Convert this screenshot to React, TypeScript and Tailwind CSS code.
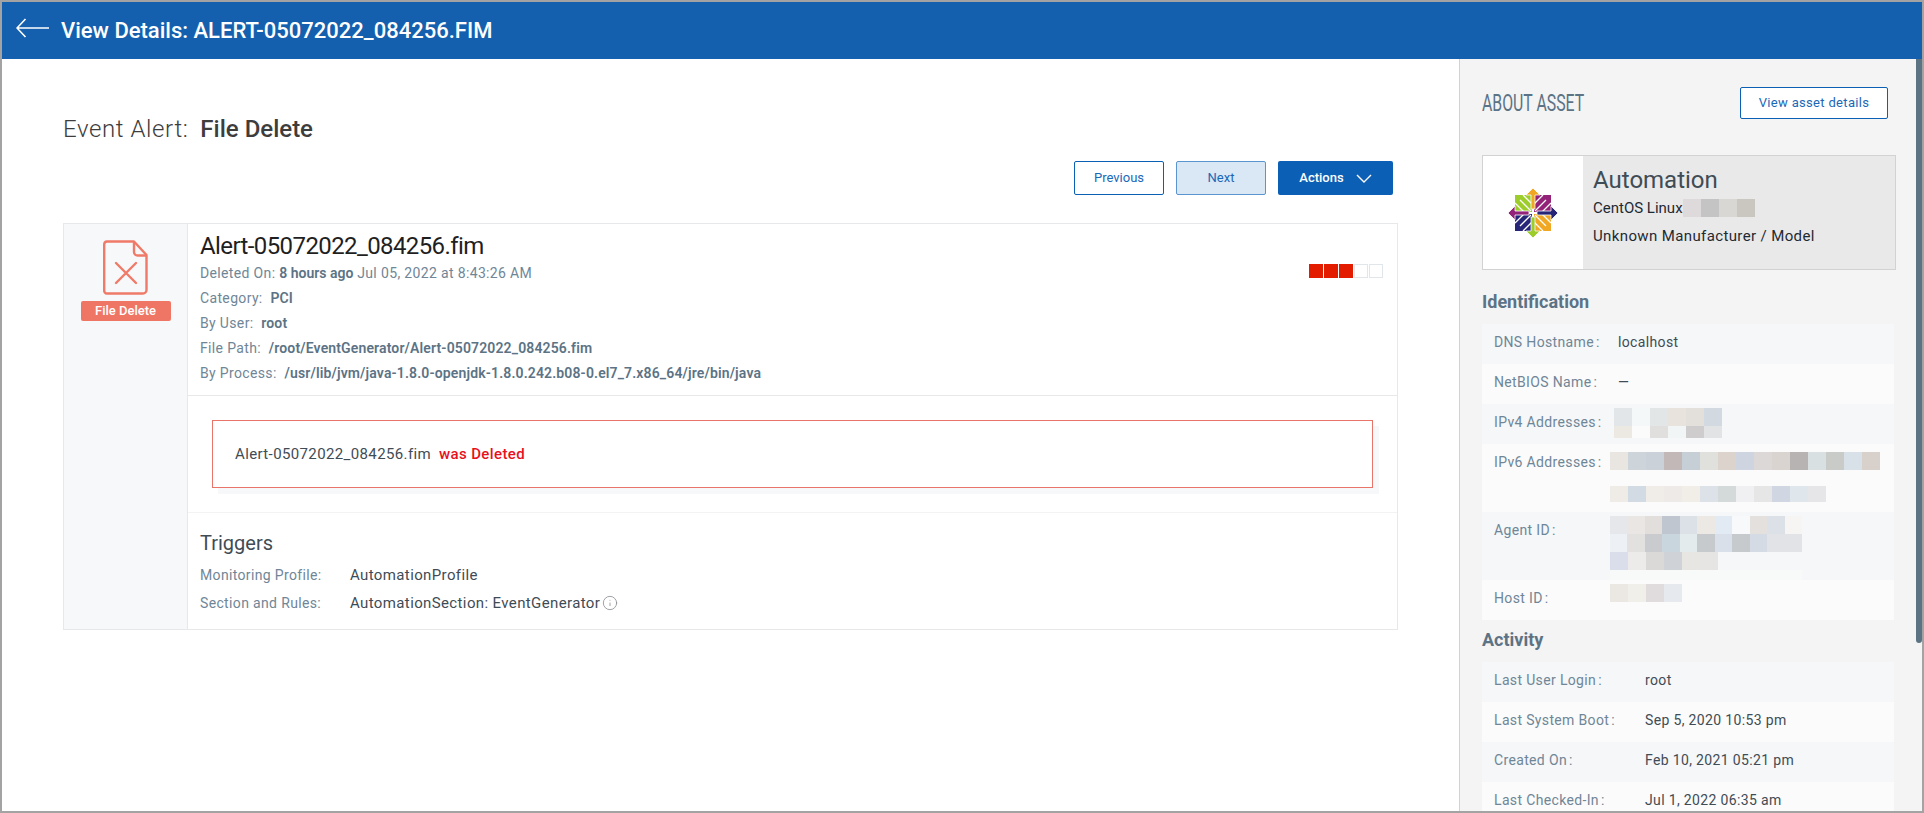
import { Info } from "lucide-react";

const LABEL = "text-sm tracking-wide text-[#6f8697]";
const VALUE = "text-sm tracking-wide text-[#3f4c55]";
const BODY_VALUE = "text-[15px] tracking-wide text-[#3f4c55]";

const ROBOTO = { fontFamily: "Roboto, sans-serif" };

type BlurRow = { height: string; colors: string[]; className?: string };

const IPV4_BLUR: BlurRow[] = [
  {
    height: "h-4.5",
    colors: ["#e2e6e8", "#f5f8f9", "#e2e6e7", "#e9e3de", "#e3e0dc", "#d3d9e0"],
  },
  {
    height: "h-3",
    colors: ["#ece8e2", "#fbfbfb", "#e0dfdd", "#f2f5f6", "#cecccc", "#e2e3e5"],
  },
];

const IPV6_BLUR: BlurRow[] = [
  {
    height: "h-4.5",
    colors: [
      "#e9e5e1", "#cdd4da", "#cad1d8", "#c2b8b8", "#c6ced6", "#e0e1dd", "#ddd3cd", "#ced5e0",
      "#dcd8d8", "#d9d4d0", "#b8b3b3", "#d8e0e1", "#c9cbc9", "#d8e1e8", "#d8d0ca",
    ],
  },
  {
    height: "h-4",
    className: "mt-4",
    colors: [
      "#efebe7", "#d2dbe3", "#f0ede9", "#eeeae7", "#f1eee8", "#dde1e8", "#d4d9d9", "#f0f0f2",
      "#e6e6e6", "#d0d7e2", "#dfe6ec", "#e6e6e8",
    ],
  },
];

const AGENT_BLUR: BlurRow[] = [
  {
    height: "h-4.5",
    colors: [
      "#e6e7ea", "#eae6e4", "#e1dedb", "#bfc6d0", "#dce1e8", "#ece9e5", "#e2eaf3", "#f8f9fa",
      "#e3e0dd", "#dce0e7", "#f6f5f3",
    ],
  },
  {
    height: "h-4.5",
    colors: [
      "#edf1f5", "#e2e1df", "#c9cbce", "#cad6de", "#e3ebed", "#c6cacc", "#dae0e9", "#c6cacd",
      "#d5dbe4", "#e2e3e6", "#e2e3e6",
    ],
  },
  {
    height: "h-4.5",
    colors: ["#dadeea", "#edebe9", "#dad9d7", "#cfd2d7", "#e7e6e3", "#e6e5e3"],
  },
  {
    height: "h-4",
    colors: Array(11).fill("#f8f9f9"),
  },
];

const HOST_BLUR: BlurRow[] = [
  { height: "h-4.5", colors: ["#ebe7e3", "#f1efe9", "#e0dcdd", "#e6e9ee"] },
];

const OS_BLUR: BlurRow[] = [
  { height: "h-4.5", colors: ["#dedadb", "#c4c4c4", "#d8d7d4", "#cac7c1"] },
];

const ACTIVITY = [
  { label: "Last User Login", value: "root" },
  { label: "Last System Boot", value: "Sep 5, 2020 10:53 pm" },
  { label: "Created On", value: "Feb 10, 2021 05:21 pm" },
  { label: "Last Checked-In", value: "Jul 1, 2022 06:35 am" },
];

function Blur({ rows }: { rows: BlurRow[] }) {
  return (
    <div className="flex flex-col">
      {rows.map((row, i) => (
        <div key={i} className={`flex ${row.className ?? ""}`}>
          {row.colors.map((color, j) => (
            <span key={j} className={`w-4.5 ${row.height}`} style={{ background: color }} />
          ))}
        </div>
      ))}
    </div>
  );
}

function BackArrow() {
  return (
    <svg width="33" height="20" viewBox="0 0 33 20" fill="none" stroke="white" strokeWidth="1.6" className="-mt-1.5">
      <path d="M1 10H33M9.5 1L1 10l8.5 9" />
    </svg>
  );
}

function FileDeleteIcon() {
  return (
    <svg width="45" height="55" viewBox="0 0 45 55" fill="none" stroke="#f07a68" strokeWidth="2.4">
      <path d="M4 1.5H31L43.5 15V50a3.5 3.5 0 0 1-3.5 3.5H4A3 3 0 0 1 1.2 50V4.5A3 3 0 0 1 4 1.5Z" strokeLinejoin="round" />
      <path d="M31 2V12a3.5 3.5 0 0 0 3.5 3.5H43" />
      <path d="M13 23L33 43M33 23L13 43" strokeLinecap="round" />
    </svg>
  );
}

function CentOsLogo() {
  return (
    <svg width="52" height="52" viewBox="0 0 52 52">
      <rect x="8" y="8" width="17" height="17" fill="#9ccd2a" />
      <rect x="27" y="8" width="17" height="17" fill="#932279" />
      <rect x="27" y="27" width="17" height="17" fill="#efa724" />
      <rect x="8" y="27" width="17" height="17" fill="#262577" />
      <g stroke="white" strokeWidth="1.3" fill="none">
        <path d="M13 13L24 24M39 13L28 24M39 39L28 28M13 39L24 28" />
        <path d="M8 16L18 26M16 8L26 18M44 16L34 26M36 8L26 18M44 36L34 26M36 44L26 34M8 36L18 26M16 44L26 34" />
      </g>
      <g stroke="white" strokeWidth="0.8">
        <path d="M26 1L33 8H28V22H24V8H19Z" fill="#efa724" />
        <path d="M51 26L44 33V28H30V24H44V19Z" fill="#262577" />
        <path d="M26 51L19 44H24V30H28V44H33Z" fill="#9ccd2a" />
        <path d="M1 26L8 19V24H22V28H8V33Z" fill="#932279" />
      </g>
    </svg>
  );
}

function Severity({ level }: { level: number }) {
  return (
    <div className="mt-8 mr-0.5 flex gap-px">
      {[1, 2, 3, 4, 5].map((n) => (
        <span
          key={n}
          className={
            n <= level
              ? "h-3.5 w-3.5 bg-[#e31c00]"
              : "h-3.5 w-3.5 border border-[#e0e6ea] bg-white"
          }
        />
      ))}
    </div>
  );
}

function MetaRow({ label, children }: { label: string; children: React.ReactNode }) {
  return (
    <p className="text-sm leading-6 tracking-wide text-[#6f8697]">
      {label} <span className="ml-1 font-semibold tracking-[0.01em] text-[#5c7385]">{children}</span>
    </p>
  );
}

function InfoRow({
  label,
  striped,
  wide,
  height = "h-10",
  children,
}: {
  label: string;
  striped: boolean;
  wide?: boolean;
  height?: string;
  children: React.ReactNode;
}) {
  return (
    <div className={`flex pl-3 ${height} ${striped ? "bg-[#f5f7f9]" : "bg-[#fbfbfb]"}`}>
      <div className={`shrink-0 pt-2 leading-5 ${wide ? "w-[151px]" : "w-31"} ${LABEL}`}>
        {label}
        <span className="ml-0.5">:</span>
      </div>
      {children}
    </div>
  );
}

function TextValue({ children }: { children: React.ReactNode }) {
  return <div className={`pt-2 leading-5 ${VALUE}`}>{children}</div>;
}

export default function App() {
  return (
    <div className="flex h-screen w-screen flex-col overflow-hidden border-2 border-[#a3a3a3] bg-white" style={ROBOTO}>
      <header className="flex h-14.25 shrink-0 items-center gap-3 bg-[#1560ae] pl-3.5 text-white">
        <BackArrow />
        <h1 className="text-[22px] font-medium">View Details: ALERT-05072022_084256.FIM</h1>
      </header>

      <div className="flex min-h-0 flex-1">
        <main className="ml-px min-w-0 flex-1 px-15 pt-14">
          <h2 className="text-2xl leading-7 text-[#3d3d3d]">
            <span className="font-light tracking-wide">Event Alert:</span>
            <span className="ml-3 font-medium">File Delete</span>
          </h2>

          <div className="mt-4.5 mr-1.5 flex justify-end gap-3 text-[13px]">
            <button type="button" className="h-8.5 w-[90px] rounded-xs border border-[#0b5fb4] bg-white text-[#1a68b8]">
              Previous
            </button>
            <button type="button" className="h-8.5 w-[90px] rounded-xs border border-[#5b95d0] bg-[#dae7f4] text-[#1a68b8]">
              Next
            </button>
            <button type="button" className="flex h-8.5 w-[115px] items-center justify-center gap-3 rounded-xs bg-[#0b5fb4] font-medium text-white">
              Actions
              <svg width="16" height="9" viewBox="0 0 16 9" fill="none" stroke="white" strokeWidth="1.4">
                <path d="M1 1l7 7 7-7" />
              </svg>
            </button>
          </div>

          <section className="mt-7 mr-px flex border border-[#e6e8ea]">
            <div className="flex w-31 shrink-0 flex-col items-center border-r border-[#e6e8ea] bg-[#f6f8fa] pt-4">
              <FileDeleteIcon />
              <span className="mt-1.5 w-[90px] rounded-xs bg-[#ef7565] py-0.5 text-center text-[13px] leading-4 font-medium text-white">
                File Delete
              </span>
            </div>

            <div className="min-w-0 flex-1">
              <div className="flex justify-between border-b border-[#e6e8ea] px-3 pt-2 pb-2.5">
                <div className="flex flex-col gap-px">
                  <div className="text-2xl leading-7 tracking-tight text-[#1f1f1f]">Alert-05072022_084256.fim</div>
                  <p className="text-sm leading-6 tracking-wide text-[#6f8697]">
                    Deleted On: <span className="font-semibold tracking-normal text-[#5c7385]">8 hours ago</span> Jul 05, 2022 at 8:43:26 AM
                  </p>
                  <MetaRow label="Category:">PCI</MetaRow>
                  <MetaRow label="By User:">root</MetaRow>
                  <MetaRow label="File Path:">/root/EventGenerator/Alert-05072022_084256.fim</MetaRow>
                  <MetaRow label="By Process:">
                    /usr/lib/jvm/java-1.8.0-openjdk-1.8.0.242.b08-0.el7_7.x86_64/jre/bin/java
                  </MetaRow>
                </div>
                <Severity level={3} />
              </div>

              <div className="border-b border-[#f3f3f3] p-6">
                <div className="flex h-17 items-center gap-2 border border-[#e8746a] px-5.5 shadow-[6px_6px_0_#f7f8f9]">
                  <span className={BODY_VALUE}>Alert-05072022_084256.fim</span>
                  <span className="text-[15px] font-medium tracking-wide text-[#e8101c]">was Deleted</span>
                </div>
              </div>

              <div className="px-3 pt-4 pb-3">
                <div className="text-xl leading-7 text-[#3f4c55]">Triggers</div>
                <div className="mt-1 flex">
                  <span className={`w-[150px] leading-7 ${LABEL}`}>Monitoring Profile:</span>
                  <span className={`leading-7 ${BODY_VALUE}`}>AutomationProfile</span>
                </div>
                <div className="flex items-center">
                  <span className={`w-[150px] leading-7 ${LABEL}`}>Section and Rules:</span>
                  <span className={`leading-7 ${BODY_VALUE}`}>AutomationSection: EventGenerator</span>
                  <Info className="ml-0.5 h-4 w-4 text-[#8a8f94]" strokeWidth={1.25} />
                </div>
              </div>
            </div>
          </section>
        </main>

        <aside className="flex w-[463px] shrink-0 border-l border-[#d0d2d5] bg-[#f4f4f5]">
          <div className="min-w-0 flex-1 pt-7 pr-5 pl-5.5">
            <div className="flex items-start justify-between pr-2">
              <h2 className="origin-left scale-x-66 text-2xl whitespace-nowrap text-[#5c7385]">ABOUT ASSET</h2>
              <button type="button" className="h-8 w-37 rounded-xs border border-[#0b5fb4] bg-white text-[13px] tracking-wide text-[#1a68b8]">
                View asset details
              </button>
            </div>

            <div className="mt-9 flex h-[115px] border border-[#d2d2d2] bg-[#e9e9ea]">
              <div className="flex w-25 shrink-0 items-center justify-center bg-white">
                <CentOsLogo />
              </div>
              <div className="px-2.5 pt-2">
                <div className="text-2xl leading-8 text-[#3f4c55]">Automation</div>
                <div className="flex items-center text-[15px] leading-6 text-[#1f2a33]">
                  CentOS Linux
                  <Blur rows={OS_BLUR} />
                </div>
                <div className="mt-1 text-[15px] leading-6 tracking-wide text-[#1f2a33]">Unknown Manufacturer / Model</div>
              </div>
            </div>

            <h3 className="mt-5 text-lg leading-6 font-bold text-[#5c7385]">Identification</h3>
            <div className="mt-2.5 mr-0.5">
              <InfoRow label="DNS Hostname" striped>
                <TextValue>localhost</TextValue>
              </InfoRow>
              <InfoRow label="NetBIOS Name" striped={false}>
                <TextValue>—</TextValue>
              </InfoRow>
              <InfoRow label="IPv4 Addresses" striped>
                <div className="-ml-1 pt-1">
                  <Blur rows={IPV4_BLUR} />
                </div>
              </InfoRow>
              <InfoRow label="IPv6 Addresses" striped={false} height="h-17">
                <div className="-ml-2 pt-2">
                  <Blur rows={IPV6_BLUR} />
                </div>
              </InfoRow>
              <InfoRow label="Agent ID" striped height="h-17">
                <div className="-ml-2 w-48 overflow-hidden pt-1">
                  <Blur rows={AGENT_BLUR} />
                </div>
              </InfoRow>
              <InfoRow label="Host ID" striped={false}>
                <div className="-ml-2 pt-1">
                  <Blur rows={HOST_BLUR} />
                </div>
              </InfoRow>
            </div>

            <h3 className="mt-2 text-lg leading-6 font-bold text-[#5c7385]">Activity</h3>
            <div className="mt-2.5 mr-0.5">
              {ACTIVITY.map((row, i) => (
                <InfoRow key={row.label} label={row.label} striped={i % 2 === 0} wide>
                  <TextValue>{row.value}</TextValue>
                </InfoRow>
              ))}
            </div>
          </div>
          <div className="h-146 w-1.5 shrink-0 rounded-b bg-[#5b7382]" />
        </aside>
      </div>
    </div>
  );
}
